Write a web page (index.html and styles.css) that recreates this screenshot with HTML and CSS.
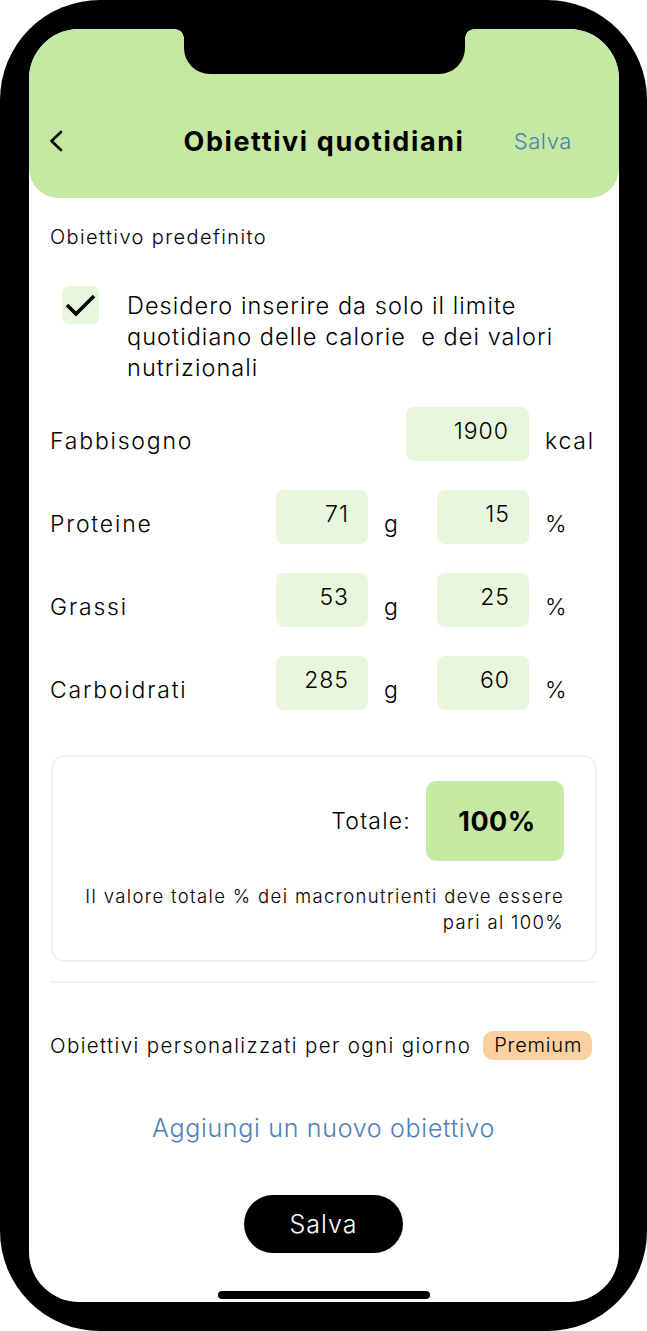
FILE: index.html
```html
<!DOCTYPE html>
<html lang="it">
<head>
<meta charset="utf-8">
<title>Obiettivi quotidiani</title>
<link rel="stylesheet" href="styles.css">
</head>
<body>
<div class="phone">
  <div class="screen">
    <div class="notch"></div>
    <header class="header">
      <svg class="back" width="14" height="22" viewBox="0 0 14 22"><path d="M12 2 L2.5 11 L12 20" fill="none" stroke="#000" stroke-width="2.6" stroke-linecap="round" stroke-linejoin="round"/></svg>
      <h1 class="title">Obiettivi quotidiani</h1>
      <span class="header-save">Salva</span>
    </header>

    <main class="content">
      <p class="section-label">Obiettivo predefinito</p>

      <div class="check-row">
        <div class="checkbox">
          <svg width="37" height="38" viewBox="0 0 37 38"><path d="M5 19 L14 28 L32 10" fill="none" stroke="#000" stroke-width="3.6" stroke-linejoin="miter"/></svg>
        </div>
        <p class="check-text">Desidero inserire da solo il limite quotidiano delle calorie&nbsp; e dei valori nutrizionali</p>
      </div>

      <div class="grid">
        <span class="label">Fabbisogno</span>
        <span class="box box-wide">1900</span>
        <span class="unit">kcal</span>

        <span class="label">Proteine</span>
        <span class="box">71</span>
        <span class="unit">g</span>
        <span class="box">15</span>
        <span class="unit">%</span>

        <span class="label">Grassi</span>
        <span class="box">53</span>
        <span class="unit">g</span>
        <span class="box">25</span>
        <span class="unit">%</span>

        <span class="label">Carboidrati</span>
        <span class="box">285</span>
        <span class="unit">g</span>
        <span class="box">60</span>
        <span class="unit">%</span>
      </div>

      <section class="card">
        <div class="total-row">
          <span class="total-label">Totale:</span>
          <span class="total-box">100%</span>
        </div>
        <p class="note">Il valore totale % dei macronutrienti deve essere<br>pari al 100%</p>
      </section>

      <hr class="divider">

      <div class="custom-row">
        <span class="custom-text">Obiettivi personalizzati per ogni giorno</span>
        <span class="badge">Premium</span>
      </div>

      <p class="add-link">Aggiungi un nuovo obiettivo</p>

      <div class="btn-wrap"><button class="save-btn">Salva</button></div>
    </main>

    <div class="home-indicator"></div>
  </div>
</div>
</body>
</html>
```

FILE: styles.css
```css
* { box-sizing: border-box; }

html, body {
  margin: 0;
  padding: 0;
  background: #fff;
}

body {
  font-family: Inter, "Noto Sans", sans-serif;
  font-weight: 350;
  color: #000;
}

.phone {
  width: 647px;
  height: 1331px;
  background: #000;
  border-radius: 100px;
  padding: 29px 28px 29px 29px;
}

.screen {
  position: relative;
  width: 590px;
  height: 1273px;
  background: #fff;
  border-radius: 50px;
  overflow: hidden;
  display: flex;
  flex-direction: column;
}

.notch {
  position: absolute;
  top: 0;
  left: 155px;
  width: 281px;
  height: 45px;
  background: #000;
  border-radius: 0 0 26px 26px;
  z-index: 2;
}
.notch::before,
.notch::after {
  content: "";
  position: absolute;
  top: 0;
  width: 9px;
  height: 9px;
}
.notch::before {
  left: -9px;
  background: radial-gradient(circle at 0 100%, transparent 8.5px, #000 9px);
}
.notch::after {
  right: -9px;
  background: radial-gradient(circle at 100% 100%, transparent 8.5px, #000 9px);
}

.header {
  height: 169px;
  flex: none;
  background: #c5e9a2;
  border-radius: 0 0 30px 30px;
  display: flex;
  align-items: center;
  padding: 54px 47px 0 20px;
  position: relative;
}

.back {
  display: block;
  flex: none;
}

.title {
  position: absolute;
  left: 0;
  right: 0;
  top: 95px;
  margin: 0;
  text-align: center;
  font-size: 27px;
  line-height: 36px;
  font-weight: 700;
  letter-spacing: 1.6px;
}

.header-save {
  margin-left: auto;
  font-size: 22px;
  letter-spacing: 0.6px;
  color: #4c7fb7;
  position: relative;
}

.content {
  padding: 0 22px 0 21px;
}

.section-label {
  margin: 26px 0 0;
  font-size: 20px;
  line-height: 26px;
  letter-spacing: 1.4px;
}

.check-row {
  display: flex;
  align-items: flex-start;
  margin-top: 36px;
  padding-left: 12px;
}

.checkbox {
  width: 37px;
  height: 38px;
  flex: none;
  background: #e8f6de;
  border-radius: 7px;
}
.checkbox svg { display: block; }

.check-text {
  margin: 4px 0 0 28px;
  font-size: 23.5px;
  line-height: 31px;
  letter-spacing: 1.05px;
  width: 450px;
}

.grid {
  display: grid;
  grid-template-columns: 226px 92px 69px 92px 1fr;
  row-gap: 29px;
  margin-top: 24px;
  align-items: center;
}

.label,
.unit {
  font-size: 23px;
  line-height: 28px;
  padding-top: 14px;
  letter-spacing: 1.8px;
}

.unit {
  padding-left: 16px;
}

.box {
  height: 54px;
  background: #e8f6de;
  border-radius: 8px;
  font-size: 23px;
  line-height: 28px;
  letter-spacing: 1px;
  text-align: right;
  padding: 10px 19px 16px 0;
}

.box-wide {
  grid-column: 2 / span 3;
  justify-self: end;
  width: 123px;
  padding-right: 20px;
}

.card {
  margin: 45px 0 0 1px;
  height: 207px;
  border: 2px solid #f1f1f1;
  border-radius: 14px;
  padding: 24px 31px 0 0;
}

.total-row {
  display: flex;
  justify-content: flex-end;
  align-items: center;
  gap: 15px;
}

.total-label {
  font-size: 23px;
  letter-spacing: 1.2px;
}

.total-box {
  width: 138px;
  height: 80px;
  background: #c5e9a2;
  border-radius: 10px;
  display: flex;
  align-items: center;
  justify-content: center;
  padding-left: 4px;
  font-size: 27px;
  font-weight: 700;
  letter-spacing: 0.5px;
}

.note {
  margin: 22px 0 0;
  text-align: right;
  font-size: 18.5px;
  line-height: 26px;
  letter-spacing: 1.35px;
}

.divider {
  margin: 19px 0 0;
  border: 0;
  height: 2px;
  background: #f1f1f1;
}

.custom-row {
  display: flex;
  align-items: center;
  margin-top: 48px;
  gap: 12px;
}

.custom-text {
  font-size: 20.5px;
  letter-spacing: 1.38px;
}

.badge {
  background: #fbcf9f;
  border-radius: 10px;
  height: 29px;
  padding: 0 10px 0 11px;
  font-size: 20px;
  line-height: 29px;
  letter-spacing: 0.8px;
}

.add-link {
  margin: 52px 0 0;
  text-align: center;
  font-size: 25px;
  line-height: 32px;
  letter-spacing: 0.7px;
  color: #4c7fb7;
}

.btn-wrap {
  display: flex;
  justify-content: center;
  margin-top: 51px;
}

.save-btn {
  width: 159px;
  height: 58px;
  border: 0;
  border-radius: 29px;
  background: #000;
  color: #fff;
  font-family: inherit;
  font-weight: 350;
  font-size: 25px;
  letter-spacing: 1px;
  padding: 0;
}

.home-indicator {
  margin: auto auto 3px;
  width: 212px;
  height: 8px;
  border-radius: 4px;
  background: #000;
}
```
